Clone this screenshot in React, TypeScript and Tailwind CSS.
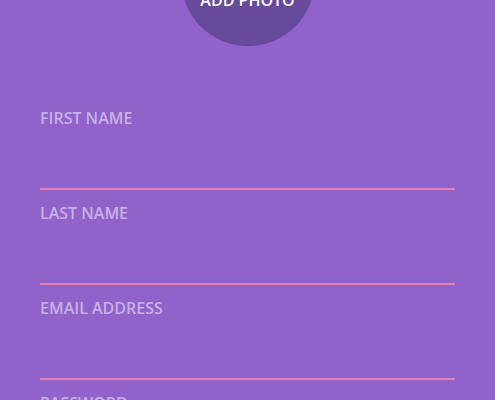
export default function App() {
  const fields = ['First Name', 'Last Name', 'Email Address', 'Password'];

  return (
    <main className="h-[400px] overflow-hidden bg-[#9162ca] font-['Open_Sans',sans-serif]">
      <div className="flex justify-center">
        <div className="-mt-[88px] flex h-[134px] w-[134px] items-start justify-center rounded-full bg-[#674a9b] pt-[76px]">
          <span className="text-[16px] font-semibold uppercase leading-[24px] text-white">Add Photo</span>
        </div>
      </div>

      <form className="mt-[60px] px-10">
        {fields.map((f) => (
          <div key={f} className="mb-[11px]">
            <label className="block text-[16px] font-semibold uppercase leading-[24px] text-[#c6b1e6]">{f}</label>
            <div className="h-[60px] border-b-2 border-[#e27fb6]" />
          </div>
        ))}
      </form>
    </main>
  );
}
